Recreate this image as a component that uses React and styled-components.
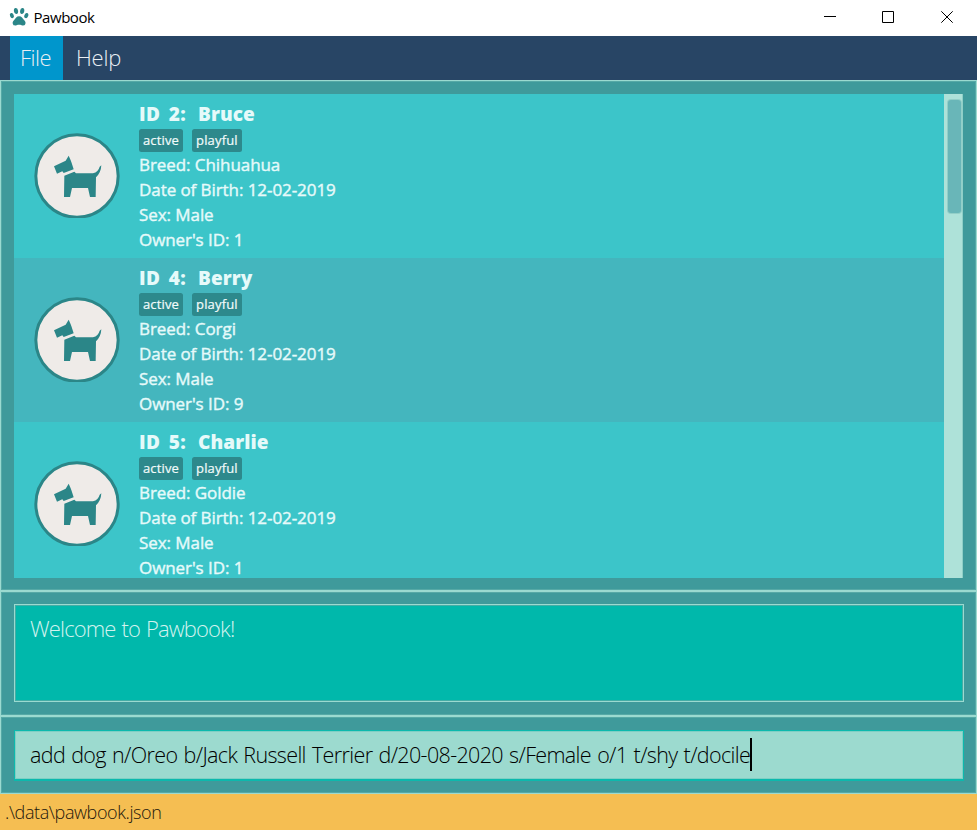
import React from "react";
import styled, { createGlobalStyle } from "styled-components";

const GlobalStyle = createGlobalStyle`
  * { box-sizing: border-box; }
  body {
    margin: 0;
    overflow: hidden;
    font-family: "Open Sans", "Noto Sans", sans-serif;
  }
`;

const Window = styled.div`
  display: flex;
  flex-direction: column;
  width: 100%;
  height: 830px;
  background: #3f9a9b;
`;

const TitleBar = styled.header`
  display: flex;
  flex: none;
  align-items: center;
  height: 36px;
  padding: 0 1px 2px 9px;
  background: #fff;
`;

const Title = styled.span`
  flex: 1;
  margin-left: 4.5px;
  font-size: 15px;
  line-height: 34px;
  letter-spacing: -0.45px;
  color: #000;
`;

const WindowButton = styled.span`
  display: flex;
  justify-content: center;
  width: 58.5px;
`;

const MenuBar = styled.nav`
  display: flex;
  flex: none;
  height: 44px;
  padding-left: 10px;
  background: #284565;
`;

const MenuItem = styled.span`
  height: 44px;
  padding: 0 10px;
  width: ${(p) => (p.$active ? "53px" : "auto")};
  margin-right: 3px;
  font-size: 22px;
  font-weight: 300;
  line-height: 42px;
  letter-spacing: ${(p) => (p.$active ? "-0.5px" : "-0.2px")};
  color: #e9eef3;
  background: ${(p) => (p.$active ? "#0096cc" : "transparent")};
`;

const Panel = styled.section`
  flex: none;
  height: ${(p) => p.$height}px;
  padding: 13px 12px 12px 13px;
  border: 1px solid #9bdad0;
  box-shadow: inset 0 0 0 1px #56a9a6;
`;

const ListView = styled.div`
  display: flex;
  height: 484px;
  width: 949px;
  overflow: hidden;
`;

const Cards = styled.div`
  flex: 1;
`;

const Card = styled.article`
  display: flex;
  height: 164px;
  padding: 8px 0 0 20px;
  background: ${(p) => (p.$alt ? "#44b6be" : "#3cc5c9")};
`;

const Avatar = styled.svg`
  display: block;
  flex: none;
  width: 86px;
  height: 85px;
  margin: 31px 19px 0 0;
`;

const Details = styled.div`
  font-size: 17px;
  line-height: 25px;
  letter-spacing: -0.07px;
  color: #e6fafa;
`;

const Field = styled.div`
  -webkit-text-stroke: 0.4px currentColor;
`;

const Heading = styled.h2`
  display: flex;
  gap: 11px;
  margin: 0;
  font-size: 19px;
  font-weight: 800;
  line-height: 25px;
  letter-spacing: 0.1px;
`;

const CardId = styled.span`
  width: 48px;
  letter-spacing: 0.4px;
  word-spacing: 3px;
`;

const Tags = styled.div`
  display: flex;
  gap: 9px;
  height: 25px;
  padding-top: 2px;
`;

const Tag = styled.span`
  height: 23px;
  padding: 0 4px;
  border-radius: 2.5px;
  background: #2d898c;
  font-size: 13px;
  line-height: 22px;
  letter-spacing: 0.15px;
  color: #f2fbfb;
  -webkit-text-stroke: 0.2px currentColor;
`;

const ScrollTrack = styled.div`
  width: 19px;
  padding: 6px 1px 0 4px;
  background: #aee2d9;
  border-right: 1px solid #8fcfc7;
`;

const ScrollThumb = styled.div`
  width: 13px;
  height: 113px;
  border-radius: 3px;
  background: #69b6b8;
  box-shadow: 0 0 0 1px #93cfc8;
`;

const ResultBox = styled.div`
  width: 950px;
  height: 98px;
  margin-top: -1px;
  padding: 8px 15px;
  border: 1px solid #9bdad0;
  box-shadow: inset 0 0 0 1px #43ada6;
  background: #00b8ab;
  font-size: 22px;
  font-weight: 300;
  line-height: 30px;
  letter-spacing: -0.85px;
  word-spacing: 1px;
  color: #d3f3ef;
`;

const CommandBox = styled.div`
  display: flex;
  align-items: center;
  width: 950px;
  height: 51px;
  padding: 0 15px 1px;
  border: 1px solid #0cb9ad;
  border-bottom-width: 2px;
  box-shadow: inset 0 0 0 1px #7fcfc4;
  background: #9cdacf;
  font-size: 21.5px;
  font-weight: 300;
  letter-spacing: -0.64px;
  word-spacing: 1.2px;
  color: #000;
`;

const Caret = styled.span`
  width: 1.5px;
  height: 33px;
  background: #000;
`;

const StatusBar = styled.footer`
  flex: 1;
  padding: 1px 0 0 5px;
  background: #f5be52;
  font-size: 18px;
  font-weight: 300;
  line-height: 35px;
  letter-spacing: -0.4px;
  color: #1c170c;
`;

const dogs = [
  { id: 2, name: "Bruce", breed: "Chihuahua", owner: 1 },
  { id: 4, name: "Berry", breed: "Corgi", owner: 9 },
  { id: 5, name: "Charlie", breed: "Goldie", owner: 1 },
];

function PawIcon() {
  return (
    <svg width="20" height="20" viewBox="0 0 20 20" fill="#2b8688">
      <ellipse cx="7" cy="4" rx="2.1" ry="3" transform="rotate(-8 7 4)" />
      <ellipse cx="13.2" cy="4" rx="2.1" ry="3" transform="rotate(8 13.2 4)" />
      <ellipse cx="2.9" cy="8.6" rx="1.9" ry="2.7" transform="rotate(-22 2.9 8.6)" />
      <ellipse cx="17.3" cy="8.6" rx="1.9" ry="2.7" transform="rotate(22 17.3 8.6)" />
      <path d="M10.1 9.3c-2.6 0-3.5 2.2-4.9 3.6-1.4 1.5-1.900 2.500-1.300 4.200.7 1.900 2.400 1.500 3.700 1.100 1.800-.6 3.200-.6 5 0 1.300.4 3 .8 3.700-1.100.6-1.700.1-2.700-1.300-4.200-1.400-1.400-2.300-3.600-4.900-3.600z" />
    </svg>
  );
}

function DogAvatar() {
  return (
    <Avatar viewBox="42 129 258 255">
      <circle cx="171" cy="258" r="123.5" fill="#efebe8" stroke="#2b8688" strokeWidth="9" />
      <g fill="#2b8688">
        <path d="M102 229 L137 212 L146 197 L152 211 L155 219 L161 238 L131 249 L127 244 L111 251Z" />
        <path d="M133 257 L163 245 L168 250 L219 250 Q235 245 239 230 L244 226 Q243 248 228 262 L227 321 L210 321 L204 294 L156 294 L150 321 L132 321Z" />
      </g>
    </Avatar>
  );
}

function DogCard({ dog, alt }) {
  return (
    <Card $alt={alt}>
      <DogAvatar />
      <Details>
        <Heading>
          <CardId>ID {dog.id}:</CardId>
          <span>{dog.name}</span>
        </Heading>
        <Tags>
          <Tag>active</Tag>
          <Tag>playful</Tag>
        </Tags>
        <Field>Breed: {dog.breed}</Field>
        <Field>Date of Birth: 12-02-2019</Field>
        <Field>Sex: Male</Field>
        <Field>Owner's ID: {dog.owner}</Field>
      </Details>
    </Card>
  );
}

export default function App() {
  return (
    <Window>
      <GlobalStyle />
      <TitleBar>
        <PawIcon />
        <Title>Pawbook</Title>
        <WindowButton>
          <svg width="12" height="12"><path d="M0 5.500H12" stroke="#000" /></svg>
        </WindowButton>
        <WindowButton>
          <svg width="12" height="12"><path d="M.5 .5H11.500V11.500H.5Z" fill="none" stroke="#000" /></svg>
        </WindowButton>
        <WindowButton>
          <svg width="12" height="12"><path d="M.3 .3L11.700 11.700M11.700 .3L.3 11.700" stroke="#000" /></svg>
        </WindowButton>
      </TitleBar>
      <MenuBar>
        <MenuItem $active>File</MenuItem>
        <MenuItem>Help</MenuItem>
      </MenuBar>
      <Panel $height={511}>
        <ListView>
          <Cards>
            {dogs.map((dog, i) => (
              <DogCard key={dog.id} dog={dog} alt={i % 2 === 1} />
            ))}
          </Cards>
          <ScrollTrack>
            <ScrollThumb />
          </ScrollTrack>
        </ListView>
      </Panel>
      <Panel $height={125}>
        <ResultBox>Welcome to Pawbook!</ResultBox>
      </Panel>
      <Panel $height={78}>
        <CommandBox>
          add dog n/Oreo b/Jack Russell Terrier d/20-08-2020 s/Female o/1 t/shy t/docile
          <Caret />
        </CommandBox>
      </Panel>
      <StatusBar>.\data\pawbook.json</StatusBar>
    </Window>
  );
}
